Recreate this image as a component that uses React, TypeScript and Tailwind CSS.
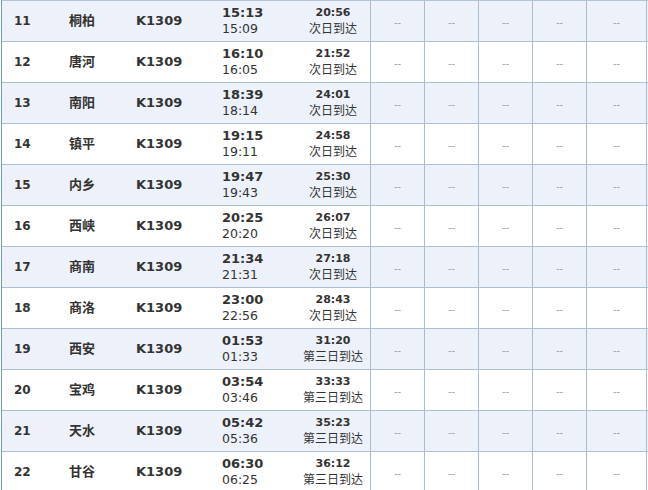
const rows = [
  { no: 11, name: "桐柏", dep: "15:13", arr0: "15:09", arr: "20:56", day: "次日到达" },
  { no: 12, name: "唐河", dep: "16:10", arr0: "16:05", arr: "21:52", day: "次日到达" },
  { no: 13, name: "南阳", dep: "18:39", arr0: "18:14", arr: "24:01", day: "次日到达" },
  { no: 14, name: "镇平", dep: "19:15", arr0: "19:11", arr: "24:58", day: "次日到达" },
  { no: 15, name: "内乡", dep: "19:47", arr0: "19:43", arr: "25:30", day: "次日到达" },
  { no: 16, name: "西峡", dep: "20:25", arr0: "20:20", arr: "26:07", day: "次日到达" },
  { no: 17, name: "商南", dep: "21:34", arr0: "21:31", arr: "27:18", day: "次日到达" },
  { no: 18, name: "商洛", dep: "23:00", arr0: "22:56", arr: "28:43", day: "次日到达" },
  { no: 19, name: "西安", dep: "01:53", arr0: "01:33", arr: "31:20", day: "第三日到达" },
  { no: 20, name: "宝鸡", dep: "03:54", arr0: "03:46", arr: "33:33", day: "第三日到达" },
  { no: 21, name: "天水", dep: "05:42", arr0: "05:36", arr: "35:23", day: "第三日到达" },
  { no: 22, name: "甘谷", dep: "06:30", arr0: "06:25", arr: "36:12", day: "第三日到达" },
];

const font = "font-['DejaVu_Sans','Noto_Sans_CJK_SC',sans-serif]";

function Dash({ last }: { last?: boolean }) {
  return (
    <div
      className={`${
        last ? "w-[61px] border-r" : "w-[54px]"
      } border-l border-[#a9bccd] flex items-center justify-center text-[10px] text-[#a3a3a3] pt-[2px]`}
    >
      --
    </div>
  );
}

export default function App() {
  return (
    <div className={`w-[648px] bg-white text-[#333] ${font}`}>
      <div className="ml-px border-l border-[#6f9cbf] border-t border-t-[#b3c4d4]">
        {rows.map((r) => (
          <div
            key={r.no}
            className={`flex h-[41px] border-b border-[#adc0d2] ${
              r.no % 2 === 1 ? "bg-[#edf2fa]" : "bg-white"
            }`}
          >
            <div className="w-[55px] pl-3 flex items-center text-[12px] font-bold">
              {r.no}
            </div>
            <div className="w-[67px] pl-3 flex items-center text-[13px] font-bold">
              {r.name}
            </div>
            <div className="w-[76px] pl-3 flex items-center text-[13px] font-bold">
              K1309
            </div>
            <div className="w-[96px] pl-[22px] flex flex-col justify-center leading-[16px]">
              <span className="text-[13px] font-bold">{r.dep}</span>
              <span className="text-[12.5px]">{r.arr0}</span>
            </div>
            <div className="w-[74px] flex flex-col items-center justify-center leading-[16px]">
              <span className="text-[11px] font-bold">{r.arr}</span>
              <span className="text-[12px]">{r.day}</span>
            </div>
            <Dash />
            <Dash />
            <Dash />
            <Dash />
            <Dash last />
          </div>
        ))}
      </div>
    </div>
  );
}
